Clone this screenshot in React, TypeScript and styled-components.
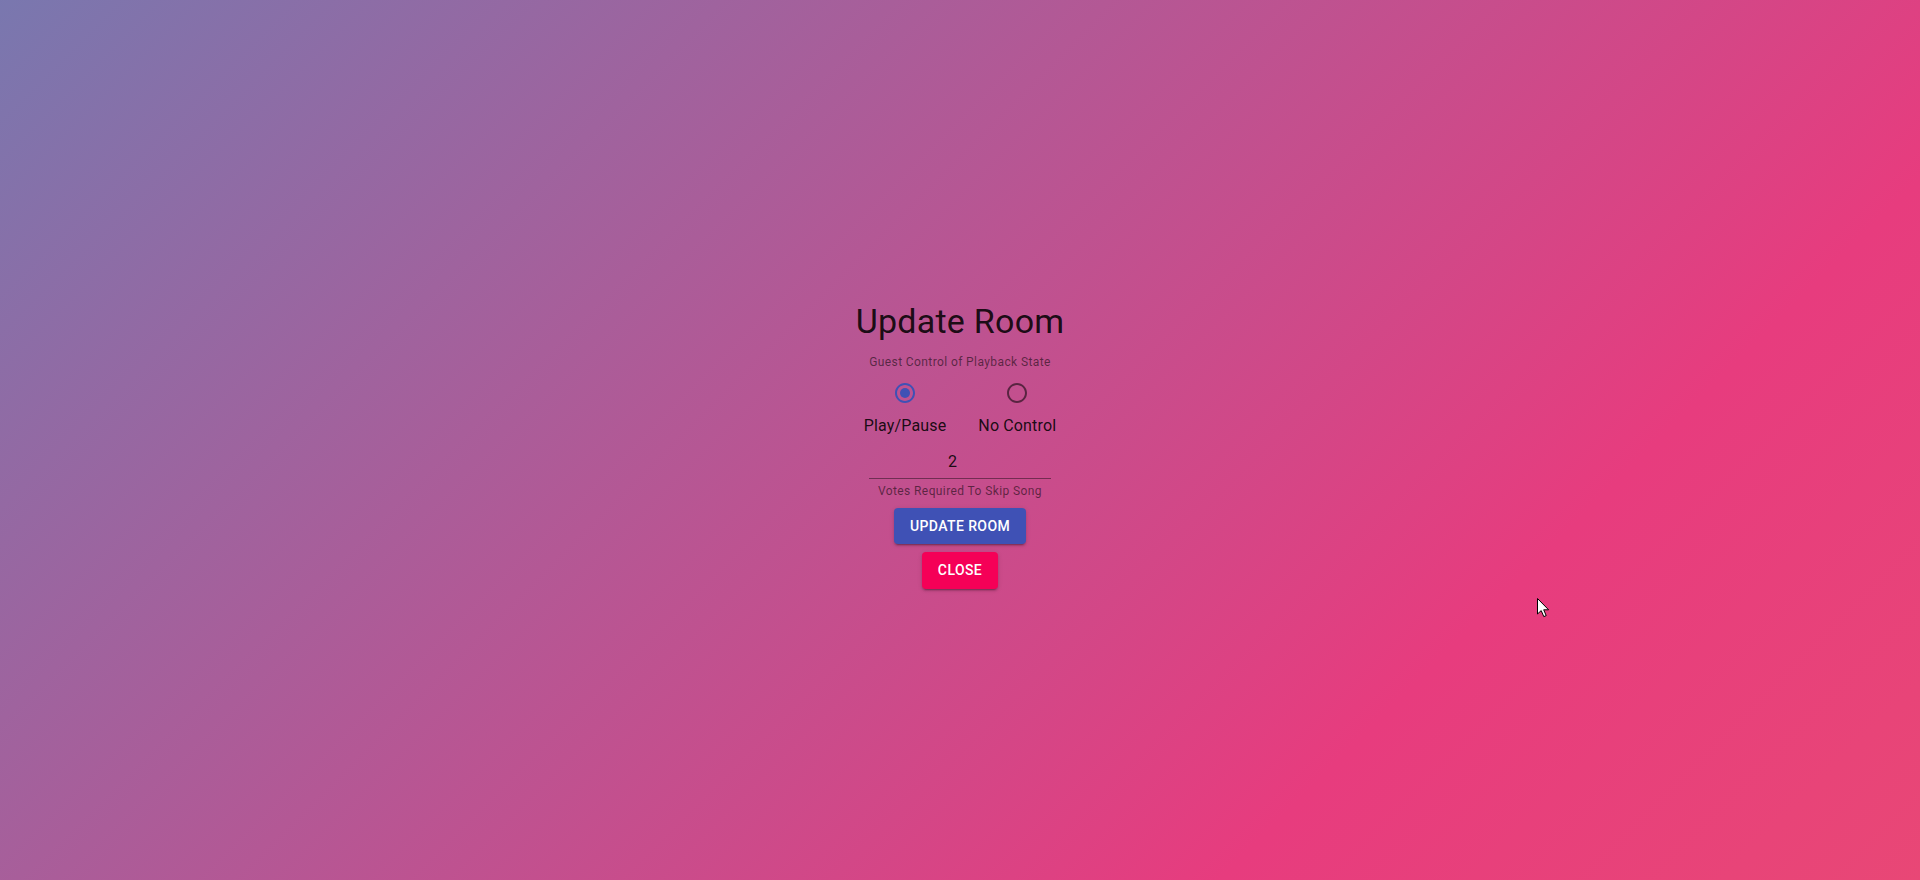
import React, { useState } from "react";
import styled, { createGlobalStyle } from "styled-components";

const GlobalStyle = createGlobalStyle`
  html, body {
    margin: 0;
    padding: 0;
    height: 100%;
  }
  body {
    font-family: Roboto, "Liberation Sans", Arial, sans-serif;
    background: linear-gradient(135deg, #23a6d5 -59%, #e73c7e 75%, #ee7752 208%);
    -webkit-font-smoothing: antialiased;
  }
  #root {
    height: 100%;
  }
`;

const Page = styled.main`
  position: relative;
  width: 100%;
  height: 100vh;
  display: flex;
  align-items: center;
  justify-content: center;
  overflow: hidden;
`;

const Stack = styled.div`
  display: flex;
  flex-direction: column;
  align-items: center;
  margin-top: 10px;
`;

const Item = styled.div<{ $pb?: number }>`
  padding: 4px 4px ${(p) => (p.$pb ?? 4)}px;
  display: flex;
  flex-direction: column;
  align-items: center;
`;

const Title = styled.h4`
  margin: 0;
  font-size: 34px;
  font-weight: 400;
  line-height: 1.235;
  letter-spacing: 0.00735em;
  color: rgba(0, 0, 0, 0.87);
`;

const HelperText = styled.p`
  margin: 3px 0 0;
  font-size: 12px;
  line-height: 1.66;
  letter-spacing: 0.03333em;
  color: rgba(0, 0, 0, 0.54);
  text-align: center;
`;

const RadioRow = styled.div`
  display: flex;
  flex-direction: row;
  margin-top: -1px;
`;

const OptionLabel = styled.label`
  display: inline-flex;
  flex-direction: column;
  align-items: center;
  margin: 0 16px;
  cursor: pointer;
`;

const RadioBox = styled.span<{ $checked: boolean }>`
  position: relative;
  display: inline-flex;
  padding: 9px;
  border-radius: 50%;
  color: ${(p) => (p.$checked ? "#3f51b5" : "rgba(0, 0, 0, 0.54)")};

  input {
    position: absolute;
    inset: 0;
    margin: 0;
    opacity: 0;
    cursor: pointer;
  }
`;

const LabelText = styled.span`
  font-size: 16px;
  line-height: 1.5;
  letter-spacing: 0.00938em;
  color: rgba(0, 0, 0, 0.87);
`;

const InputWrap = styled.div`
  display: flex;
  width: 182px;
  border-bottom: 1px solid rgba(0, 0, 0, 0.42);
`;

const NumberInput = styled.input`
  width: 100%;
  box-sizing: content-box;
  height: 19px;
  padding: 6px 15px 7px 0;
  border: 0;
  margin: 0;
  background: transparent;
  font-family: inherit;
  font-size: 16px;
  letter-spacing: 0.00938em;
  color: rgba(0, 0, 0, 0.87);
  text-align: center;
  outline: none;
  -moz-appearance: textfield;

  &::-webkit-inner-spin-button,
  &::-webkit-outer-spin-button {
    -webkit-appearance: none;
    margin: 0;
  }
`;

const Button = styled.button<{ $color: string }>`
  min-width: 64px;
  padding: 6px 16px;
  border: 0;
  border-radius: 4px;
  background: ${(p) => p.$color};
  color: #fff;
  font-family: inherit;
  font-size: 14px;
  font-weight: 500;
  line-height: 1.75;
  letter-spacing: 0.02857em;
  text-transform: uppercase;
  cursor: pointer;
  box-shadow: 0px 3px 1px -2px rgba(0, 0, 0, 0.2),
    0px 2px 2px 0px rgba(0, 0, 0, 0.14), 0px 1px 5px 0px rgba(0, 0, 0, 0.12);
`;

const Cursor = styled.svg`
  position: absolute;
  left: 1537px;
  top: 598px;
  pointer-events: none;
`;

function RadioIcon({ checked }: { checked: boolean }) {
  return (
    <svg width="24" height="24" viewBox="0 0 24 24" fill="currentColor">
      <path d="M12 2C6.48 2 2 6.48 2 12s4.48 10 10 10 10-4.48 10-10S17.52 2 12 2zm0 18c-4.42 0-8-3.58-8-8s3.58-8 8-8 8 3.58 8 8-3.58 8-8 8z" />
      {checked && <circle cx="12" cy="12" r="5" />}
    </svg>
  );
}

export default function App() {
  const [control, setControl] = useState("true");
  const options = [
    { value: "true", label: "Play/Pause" },
    { value: "false", label: "No Control" },
  ];
  return (
    <>
      <GlobalStyle />
      <Page>
        <Stack>
          <Item $pb={3}>
            <Title>Update Room</Title>
          </Item>
          <Item>
            <HelperText>Guest Control of Playback State</HelperText>
            <RadioRow>
              {options.map((o) => (
                <OptionLabel key={o.value}>
                  <RadioBox $checked={control === o.value}>
                    <input
                      type="radio"
                      name="control"
                      value={o.value}
                      checked={control === o.value}
                      onChange={() => setControl(o.value)}
                    />
                    <RadioIcon checked={control === o.value} />
                  </RadioBox>
                  <LabelText>{o.label}</LabelText>
                </OptionLabel>
              ))}
            </RadioRow>
          </Item>
          <Item $pb={2}>
            <InputWrap>
              <NumberInput type="number" defaultValue={2} min={1} />
            </InputWrap>
            <HelperText>Votes Required To Skip Song</HelperText>
          </Item>
          <Item>
            <Button $color="#3f51b5">Update Room</Button>
          </Item>
          <Item>
            <Button $color="#f50057">Close</Button>
          </Item>
        </Stack>
        <Cursor width="13" height="20" viewBox="0 0 13 20">
          <path
            d="M0.5 0.5 L0.5 16 L4.2 12.6 L6.8 18.6 L9.2 17.6 L6.7 11.8 L11.6 11.8 Z"
            fill="#fff"
            stroke="#000"
            strokeWidth="1"
            strokeLinejoin="round"
          />
        </Cursor>
      </Page>
    </>
  );
}
